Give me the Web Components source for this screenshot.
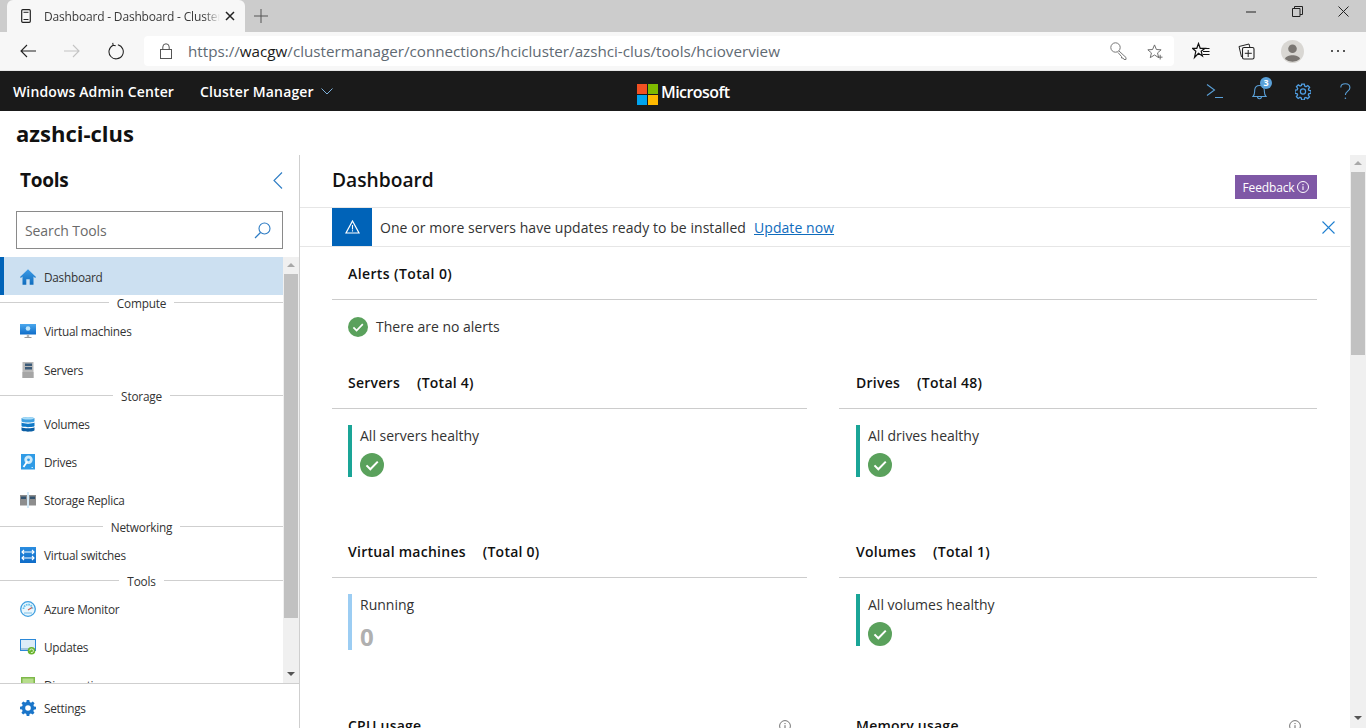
<!DOCTYPE html>
<html lang="en"><head><meta charset="utf-8"><title>Dashboard</title>
<style>
html,body{margin:0;height:100%;overflow:hidden;background:#fff}
body{width:1366px;height:728px;display:flex;flex-direction:column;font-family:"Open Sans","Noto Sans","Liberation Sans",sans-serif;color:#1a1a1a;font-size:14px}
.workspace{display:flex;height:573px;overflow:hidden}
</style></head><body>
<browser-chrome></browser-chrome>
<wac-header></wac-header>
<page-title>azshci-clus</page-title>
<div class="workspace">
<tool-sidebar>
<nav-item icon="home" active nudge>Dashboard</nav-item>
<nav-sep>Compute</nav-sep>
<nav-item icon="vm">Virtual machines</nav-item>
<nav-item icon="server" nudge>Servers</nav-item>
<nav-sep>Storage</nav-sep>
<nav-item icon="volumes">Volumes</nav-item>
<nav-item icon="drives">Drives</nav-item>
<nav-item icon="replica">Storage Replica</nav-item>
<nav-sep>Networking</nav-sep>
<nav-item icon="switches">Virtual switches</nav-item>
<nav-sep tight>Tools</nav-sep>
<nav-item icon="monitor">Azure Monitor</nav-item>
<nav-item icon="updates">Updates</nav-item>
<nav-item icon="diag">Diagnostics</nav-item>
</tool-sidebar>
<dash-view>
<section-head>Alerts (Total 0)</section-head>
<ok-line>There are no alerts</ok-line>
<dash-grid>
<dash-cell label="Servers" total="(Total 4)"><status-tile text="All servers healthy"></status-tile></dash-cell>
<dash-cell label="Drives" total="(Total 48)"><status-tile text="All drives healthy"></status-tile></dash-cell>
<dash-cell label="Virtual machines" total="(Total 0)"><status-tile text="Running" count="0"></status-tile></dash-cell>
<dash-cell label="Volumes" total="(Total 1)"><status-tile text="All volumes healthy"></status-tile></dash-cell>
<dash-cell label="CPU usage" info></dash-cell>
<dash-cell label="Memory usage" info></dash-cell>
</dash-grid>
</dash-view>
</div>
<script>
const ICONS={
home:`<svg viewBox="0 0 16 16" width="16" height="16"><defs><linearGradient id="gh" x1="0" y1="0" x2="0" y2="1"><stop offset="0" stop-color="#3c9be6"/><stop offset="1" stop-color="#0f6cbd"/></linearGradient></defs><path fill="url(#gh)" d="M8 .3 0 8l.9.9L2.500 7.500V15.800H6.300V10.300H9.700V15.800H13.500V7.500L15.100 8.900 16 8Z"/></svg>`,
vm:`<svg viewBox="0 0 16 16" width="16" height="16"><defs><linearGradient id="g1" x1="0" y1="0" x2="0" y2="1"><stop offset="0" stop-color="#4aa8ee"/><stop offset="1" stop-color="#0f6cc8"/></linearGradient></defs><rect y="1" width="16" height="10.500" fill="url(#g1)"/><circle cx="8" cy="5.500" r="2.300" fill="#bfe6fb"/><path fill="#b5b5b5" d="M6.800 11.500h2.400v2.500H6.800Z"/><path fill="#999" d="M4.500 14h7v1h-7Z"/></svg>`,
server:`<svg viewBox="0 0 16 16" width="16" height="16"><rect x="2.500" y="0" width="11" height="16" fill="#b9b9b9"/><rect x="5" y="1.500" width="7" height="2.500" fill="#3b5a78"/><rect x="5" y="5" width="7" height="2.500" fill="#3b5a78"/><rect x="2.500" y="10" width="11" height="6" fill="#a6a6a6"/></svg>`,
volumes:`<svg viewBox="0 0 16 16" width="16" height="16"><path fill="#3f9fe0" d="M1.500 2.500C1.500 .8 14.500 .8 14.500 2.500V5.300C14.500 7 1.500 7 1.500 5.300Z"/><path fill="#1079c7" d="M1.500 6.500c2 1.500 11 1.500 13 0V10C14.500 11.500 1.500 11.500 1.500 10Z"/><path fill="#0b5fa5" d="M1.500 11.200c2 1.500 11 1.500 13 0V14C14.500 16.200 1.500 16.200 1.500 14Z"/><ellipse cx="8" cy="2.300" rx="6" ry="1.300" fill="#a7dcf7"/></svg>`,
drives:`<svg viewBox="0 0 16 16" width="16" height="16"><rect x="1" width="14" height="15.500" fill="#2f9be6"/><circle cx="8.500" cy="5.800" r="4.200" fill="#cdeafa"/><circle cx="8.500" cy="5.800" r="1.400" fill="#2f9be6"/><path d="M7.300 7.500 3.500 13" stroke="#fff" stroke-width="1.800"/><rect x="11.500" y="13" width="1.500" height="1" fill="#bfe6fb"/></svg>`,
replica:`<svg viewBox="0 0 16 16" width="16" height="16"><rect y="3" width="7" height="10.500" fill="#8d8d8d"/><rect x="9" y="3" width="7" height="10.500" fill="#8d8d8d"/><rect x="1" y="4.500" width="5" height="2.500" fill="#33536f"/><rect x="10" y="4.500" width="5" height="2.500" fill="#33536f"/><rect x="7.500" y="0" width="1" height="16" fill="#a7d4f0"/></svg>`,
switches:`<svg viewBox="0 0 16 16" width="16" height="16"><defs><linearGradient id="gs" x1="0" y1="0" x2="0" y2="1"><stop offset="0" stop-color="#2a8de0"/><stop offset="1" stop-color="#0f6cc8"/></linearGradient></defs><rect width="16" height="16" fill="url(#gs)"/><g fill="none" stroke="#fff" stroke-width="1.100"><path d="M2 5h12M4 3 2 5l2 2M12 3l2 2-2 2"/><path d="M2 11h12M4 9l-2 2 2 2M12 9l2 2-2 2"/></g></svg>`,
monitor:`<svg viewBox="0 0 16 16" width="16" height="16"><circle cx="8" cy="8" r="7.300" fill="#e9f6fd" stroke="#3f9fe0" stroke-width="1.300"/><path d="M3.500 8A4.500 4.500 0 0 1 12.500 8" fill="none" stroke="#62c0ec" stroke-width="1.800" stroke-dasharray="1.600 .8"/><path d="M8 9 12 6.500" stroke="#c9574b" stroke-width="1.100"/><path d="M4 12h8" stroke="#9fd2ee" stroke-width="1.500"/></svg>`,
updates:`<svg viewBox="0 0 16 16" width="16" height="16"><rect x=".5" y=".5" width="15" height="11" fill="#dcecf8" stroke="#2b88d8"/><path fill="#a3c4dc" d="M1 9h14v2H1Z"/><circle cx="11.500" cy="11.700" r="3.800" fill="#69b42e"/><path d="M9.800 11.700a1.800 1.800 0 1 1 1.100 1.700" fill="none" stroke="#e9f8dd" stroke-width=".9"/></svg>`,
diag:`<svg viewBox="0 0 16 16" width="16" height="16"><rect x="1" y="0" width="14" height="15" fill="#7eb84a"/><rect x="2.500" y="1.500" width="11" height="7" fill="#b7dd8c"/></svg>`,
settings:`<svg viewBox="0 0 16 16" width="16" height="16"><path fill="#1a75c9" fill-rule="evenodd" d="M6.700 0h2.600l.4 2.100 1.300.6 1.800-1.200 1.800 1.800-1.200 1.800.6 1.300 2 .3v2.600l-2.100.4-.6 1.300 1.200 1.800-1.800 1.800-1.800-1.200-1.300.6-.3 2H6.700l-.4-2.100-1.300-.6-1.800 1.200-1.800-1.800 1.200-1.800-.6-1.300-2-.3V6.700l2.100-.4.600-1.300-1.200-1.800 1.800-1.800 1.800 1.200 1.300-.6ZM8 5.200A2.800 2.800 0 1 0 8 10.800 2.800 2.800 0 0 0 8 5.200Z"/></svg>`
};
const OK=s=>`<svg viewBox="0 0 20 20" width="${s}" height="${s}" style="display:block"><circle cx="10" cy="10" r="10" fill="#5aa15c"/><path d="M5.400 10.300 8.600 13.500 14.800 7.200" fill="none" stroke="#fff" stroke-width="1.700"/></svg>`;
const INFO=`<svg viewBox="0 0 12 12" width="12" height="12" style="display:block"><circle cx="6" cy="6" r="5.400" fill="none" stroke="#666" stroke-width=".9"/><path d="M6 5.200V9M6 3v1.100" stroke="#666" stroke-width="1"/></svg>`;
function def(name,css,html){
  customElements.define(name,class extends HTMLElement{
    connectedCallback(){
      if(this.shadowRoot)return;
      const r=this.attachShadow({mode:"open"});
      const h=typeof html==="function"?html(this):html;
      r.innerHTML=`<style>${css}</style>${h}`;
    }
  });
}
def("browser-chrome",`
:host{display:block;height:71px;font-family:"Open Sans",sans-serif;flex:none}
.strip{height:32px;background:#cccccc;display:flex;align-items:stretch;position:relative}
.win{margin-left:auto;display:flex}
.win span{width:46px;display:flex;align-items:center;justify-content:center;height:23px}
.tab{margin-left:7px;width:238px;background:#f7f7f7;border-radius:6px 6px 0 0;display:flex;align-items:center;box-sizing:border-box;padding-left:14px;color:#3a3a3a;font-size:12px;letter-spacing:-.18px}
.tab .t{margin-left:13px;width:176px;overflow:hidden;white-space:nowrap;-webkit-mask-image:linear-gradient(90deg,#000 160px,transparent 176px);mask-image:linear-gradient(90deg,#000 160px,transparent 176px)}
.tab .x{margin-left:5px;display:flex}
.plus{margin-left:9px;width:16px;display:flex;align-items:center}
.bar{height:38px;background:#f7f7f7;display:flex;align-items:center;border-bottom:1px solid #e6e6e6}
.b{display:flex;align-items:center;justify-content:center;flex:none}
.addr{margin-left:20px;width:1030px;height:30px;background:#fff;border-radius:4px;display:flex;align-items:center;font-size:15.200px;color:#5f6a73}
.addr b{font-weight:400;color:#1a1a1a}
.url{margin-left:16px;white-space:nowrap;flex:1}
`,`<div class="strip">
<div class="tab"><svg width="10" height="14" viewBox="0 0 10 14"><rect x=".7" y=".7" width="8.600" height="12.600" rx="1" fill="none" stroke="#222" stroke-width="1.200"/><path d="M2.500 10.500h5M2.500 3.300h5" stroke="#222"/></svg><span class="t">Dashboard - Dashboard - Cluster Manager</span><span class="x"><svg width="10" height="10" viewBox="0 0 10 10"><path d="M1 1l8 8M9 1l-8 8" stroke="#222" stroke-width="1.500"/></svg></span></div>
<div class="plus"><svg width="14" height="14" viewBox="0 0 14 14"><path d="M7 0v14M0 7h14" stroke="#555" stroke-width="1"/></svg></div>
<div class="win">
<span><svg width="10" height="2"><path d="M0 1h10" stroke="#222"/></svg></span>
<span><svg width="11" height="11" viewBox="0 0 11 11"><path d="M.5 2.500h7.500v8H.5ZM2.500 2.500V.5h8v8H8" fill="none" stroke="#222"/></svg></span>
<span><svg width="11" height="11" viewBox="0 0 11 11"><path d="M.5.500l10 10M10.500.5l-10 10" stroke="#222"/></svg></span>
</div></div>
<div class="bar">
<span class="b" style="width:16px;margin-left:20px"><svg width="16" height="14" viewBox="0 0 16 14"><path d="M16 7H1M7 1 1 7l6 6" fill="none" stroke="#222" stroke-width="1.100"/></svg></span>
<span class="b" style="width:16px;margin-left:28px"><svg width="16" height="14" viewBox="0 0 16 14"><path d="M0 7h15M9 1l6 6-6 6" fill="none" stroke="#c4c4c4" stroke-width="1.100"/></svg></span>
<span class="b" style="width:16px;margin-left:28px"><svg width="17" height="18" viewBox="0 0 17 18"><path d="M5.400 2.900A7.600 7.600 0 1 0 10.500 2.400M5 .3 5.500 3 8.200 3.500" fill="none" stroke="#222" stroke-width="1.100"/></svg></span>
<div class="addr"><span class="b" style="width:12px;margin-left:16px"><svg width="12" height="16" viewBox="0 0 12 16"><rect x=".5" y="6.500" width="11" height="9" fill="none" stroke="#555"/><path d="M2.800 6.500V4a3.200 3.200 0 0 1 6.400 0V6.500" fill="none" stroke="#555"/></svg></span>
<span class="url">https://<b>wacgw</b>/clustermanager/connections/hcicluster/azshci-clus/tools/hcioverview</span>
<span class="b" style="width:18px"><svg width="18" height="18" viewBox="0 0 18 18"><circle cx="5.500" cy="5.500" r="4.700" fill="none" stroke="#777"/><path d="M9 9l7 6.500v2h-2l-1-1.500h-1.500v-1.500L8 10.500" fill="none" stroke="#777"/></svg></span>
<span class="b" style="width:16px;margin-left:19px;margin-right:11px"><svg width="17" height="17" viewBox="0 0 17 17"><path d="M8 1.500 10 6.400l5 .3-3.800 3.300 1.200 5L8 12.200 3.500 15l1.200-5L.9 6.700l5-.3Z" fill="none" stroke="#666"/><path d="M14 12v5M11.500 14.500h5" stroke="#666"/></svg></span>
</div>
<span class="b" style="width:18px;margin-left:18px"><svg width="18" height="18" viewBox="0 0 18 18"><path d="M6.500 1.500 8.200 6.300H13L9.200 9.300 10.500 14 6.500 11.300 2.500 15.500 3.800 9.300 0.500 6.300H4.800Z" fill="#f7f7f7" stroke="#111" stroke-width="1.200"/><path d="M10.500 6.500h7M11 9.500h6.500M11 12.500h6.500" stroke="#111" stroke-width="1.100"/></svg></span>
<span class="b" style="width:18px;margin-left:27px"><svg width="17" height="17" viewBox="0 0 17 17"><path d="M3.500 14 1 3.500 11 1l.8 3" fill="none" stroke="#222"/><rect x="4.500" y="4.500" width="11.500" height="11.500" rx="1.500" fill="#f7f7f7" stroke="#222" stroke-width="1.100"/><path d="M10.200 7v7M6.800 10.300h7" stroke="#222"/></svg></span>
<span class="b" style="width:24px;margin-left:25px"><svg width="23" height="23" viewBox="0 0 23 23"><circle cx="11.500" cy="11.500" r="11.500" fill="#d9d7d3"/><circle cx="11.500" cy="8.800" r="4.300" fill="#7a7672"/><path d="M4 19c1-5 14-5 15 0a11.500 11.500 0 0 1-15 0Z" fill="#7a7672"/></svg></span>
<span class="b" style="width:16px;margin-left:26px"><svg width="16" height="4"><circle cx="2" cy="2" r="1" fill="#222"/><circle cx="8" cy="2" r="1" fill="#222"/><circle cx="14" cy="2" r="1" fill="#222"/></svg></span>
</div>`);
def("wac-header",`
:host{display:flex;height:40px;flex:none;background:#1a1a1a;color:#fff;align-items:center;font-weight:600;font-size:14px;letter-spacing:.13px;position:relative}
.a{margin-left:13px;white-space:nowrap}
.c{margin-left:26px;white-space:nowrap}
.ch{margin-left:7px;display:flex}
.ms{position:absolute;left:637px;top:11px;display:flex;align-items:center}
.ms span{margin-left:3px;font-size:16px;font-weight:600;letter-spacing:-.55px;padding-bottom:4px;line-height:20px}
.r{margin-left:auto;display:flex;align-items:center}
.r span{display:flex;justify-content:center;position:relative}
.badge{position:absolute;left:9px;top:-6px;width:12px;height:12px;border-radius:50%;background:#5aa0d8;color:#fff;font-size:9px;font-weight:700;display:flex;align-items:center;justify-content:center;letter-spacing:0;line-height:12px;font-style:normal}
`,`<div class="a">Windows Admin Center</div><div class="c">Cluster Manager</div>
<div class="ch"><svg width="12" height="7" viewBox="0 0 12 7"><path d="M.5.500 6 6l5.500-5.500" fill="none" stroke="#7fb2dc"/></svg></div>
<div class="ms"><svg width="21" height="21" viewBox="0 0 21 21"><rect width="10" height="10" fill="#f25022"/><rect x="11" width="10" height="10" fill="#7fba00"/><rect y="11" width="10" height="10" fill="#00a4ef"/><rect x="11" y="11" width="10" height="10" fill="#ffb900"/></svg><span>Microsoft</span></div>
<div class="r">
<span style="width:18px"><svg width="18" height="16" viewBox="0 0 18 16"><path d="M1 1.500 8.500 7 1 12.500M9 14.500h8" fill="none" stroke="#5aa0d8" stroke-width="1.100"/></svg></span>
<span style="width:16px;margin-left:27px"><svg width="15" height="17" viewBox="0 0 15 17"><path d="M1 13.500c2-2 1.500-4 1.700-6.500C3 4 5 2.500 7.500 2.500S12 4 12.300 7c.2 2.500-.3 4.500 1.700 6.500ZM5.500 13.500c0 3 4 3 4 0" fill="none" stroke="#5aa0d8" stroke-width="1.100"/></svg><em class="badge">3</em></span>
<span style="width:16px;margin-left:28px"><svg width="17" height="17" viewBox="0 0 16 16"><path fill="none" stroke="#4f9fe4" stroke-width="1.300" d="M6.700.6h2.600l.4 2 1.300.6 1.800-1.200 1.800 1.800-1.200 1.800.6 1.300 2 .3v2.600l-2.100.4-.6 1.300 1.200 1.800-1.800 1.800-1.800-1.200-1.300.6-.3 2H6.700l-.4-2.100-1.300-.6-1.800 1.200-1.800-1.800 1.200-1.800-.6-1.300-2-.3V6.700l2.100-.4.600-1.300-1.200-1.800 1.800-1.800 1.800 1.200 1.300-.6Z"/><circle cx="8" cy="8" r="2.600" fill="none" stroke="#4f9fe4" stroke-width="1.200"/></svg></span>
<span style="width:14px;margin-left:27px;margin-right:14px"><svg width="11" height="17" viewBox="0 0 11 17"><path d="M.8 4.500C.8 2 2.800.7 5.300.7c2.600 0 4.600 1.500 4.600 4 0 3.500-4.500 3.300-4.500 7.300" fill="none" stroke="#5aa0d8" stroke-width="1.100"/><circle cx="5.400" cy="15.200" r=".8" fill="#5aa0d8"/></svg></span>
</div>`);
def("page-title",`:host{display:flex;align-items:center;height:44px;flex:none;padding:0 16px;font-size:22px;font-weight:700;color:#111;box-sizing:border-box;background:#fff}`,`<slot></slot>`);
def("fake-scrollbar",`
:host{display:flex;flex-direction:column;align-items:center;background:#f0f0f0;flex:none;width:16px;height:100%;position:relative;box-sizing:border-box}
.u{margin-top:6px;width:0;height:0;border:4px solid transparent;border-top:0;border-bottom:4px solid #a8a8a8}
.d{position:absolute;bottom:7px;left:4px;width:0;height:0;border:4px solid transparent;border-bottom:0;border-top:4px solid #555}
:host([low]) .d{bottom:8px}
.th{background:#c1c1c1;width:14px}
`,h=>`<div class="u"></div><div class="th" style="margin-top:${h.getAttribute("gap")}px;height:${h.getAttribute("size")}px"></div><div class="d"></div>`);
def("tool-sidebar",`
:host{display:flex;flex-direction:column;flex:none;width:300px;border-right:1px solid #cfcfcf;box-sizing:border-box;height:573px}
.h{display:flex;align-items:center;justify-content:space-between;height:50px;padding:0 16px 0 20px;flex:none}
.h b{font-size:19px;font-weight:700;color:#111;letter-spacing:-.3px}
.s{margin:6px 16px 8px;height:38px;width:267px;box-sizing:border-box;border:1px solid #8a8a8a;display:flex;align-items:center;justify-content:space-between;padding:0 11px 0 8px;flex:none;color:#6a6a6a;font-size:14px;letter-spacing:-.1px}
.l{flex:1;display:flex;min-height:0;overflow:hidden}
.items{width:283px;flex:none;overflow:hidden;display:flex;flex-direction:column}
.f{height:45px;border-top:1px solid #cfcfcf;flex:none;display:flex;align-items:center;padding-top:4.500px;box-sizing:border-box}
`,`<div class="h"><b>Tools</b><svg width="10" height="17" viewBox="0 0 10 17"><path d="M9 .5 1 8.500l8 8" fill="none" stroke="#2d7cc4" stroke-width="1.100"/></svg></div>
<div class="s"><span>Search Tools</span><svg width="17" height="17" viewBox="0 0 17 17"><circle cx="10.500" cy="6.500" r="5.500" fill="none" stroke="#2d7cc4" stroke-width="1.100"/><path d="M6.500 10.500 1 16" stroke="#2d7cc4" stroke-width="1.200"/></svg></div>
<div class="l"><div class="items"><slot></slot></div><fake-scrollbar gap="7" size="344"></fake-scrollbar></div>
<div class="f"><nav-item icon="settings">Settings</nav-item></div>`);
def("nav-item",`
:host{display:flex;align-items:center;height:38px;flex:none;box-sizing:border-box;padding:0 0 0 20px;font-size:11.800px;color:#333;letter-spacing:-.26px;white-space:nowrap;width:100%}
:host([nudge]){padding-top:2px}
:host([active]){background:#cce0f1;box-shadow:inset 4px 0 0 #0063b8}
.i{width:16px;height:16px;margin-right:8px;display:block;flex:none}
svg{display:block}
`,h=>`<span class="i">${ICONS[h.getAttribute("icon")]}</span><slot></slot>`);
def("nav-sep",`
:host{display:flex;align-items:flex-start;height:17px;flex:none;font-size:11.800px;color:#333;letter-spacing:-.2px}
:host([tight]){height:16px}
.ln{flex:1;height:1px;background:#cfcfcf;margin-top:7px}
:host([tight]) .ln{margin-top:6px}
.t{padding:0 8px;line-height:16px}
:host([tight]) .t{line-height:14px}
`,`<div class="ln"></div><div class="t"><slot></slot></div><div class="ln"></div>`);
def("dash-view",`
:host{display:flex;flex:1;min-width:0;height:573px;overflow:hidden}
.m{flex:1;min-width:0;overflow:hidden;display:flex;flex-direction:column}
.top{height:52px;flex:none;display:flex;justify-content:space-between;padding:0 33px 0 32px;box-sizing:border-box}
.top b{font-size:19.200px;font-weight:600;color:#111;margin-top:11px;line-height:28px}
.fb{margin-top:20px;width:82px;height:24px;background:#7f58a6;color:#fff;font-size:12px;display:flex;align-items:center;justify-content:center;gap:3px;letter-spacing:-.15px}
.ban{height:38px;flex:none;border-top:1px solid #e6e6e6;border-bottom:1px solid #e6e6e6;display:flex;align-items:center;padding-left:32px;font-size:14px;color:#333;letter-spacing:.06px;white-space:nowrap}
.tx{padding-top:1px}
.bi{width:40px;height:38px;background:#0063b8;display:flex;align-items:center;justify-content:center;flex:none;margin-right:8px}
a{color:#0f6cbd;margin-left:8px;padding-top:1px}
.cl{margin-left:auto;margin-right:15px;display:flex}
.c{padding:0 33px 0 32px;box-sizing:border-box}
`,`<div class="m"><div class="top"><b>Dashboard</b><div class="fb">Feedback <svg width="12" height="12" viewBox="0 0 12 12"><circle cx="6" cy="6" r="5.500" fill="none" stroke="#fff"/><path d="M6 5.200V9M6 3v1.200" stroke="#fff" stroke-width="1.100"/></svg></div></div>
<div class="ban"><span class="bi"><svg width="15" height="14" viewBox="0 0 15 14"><path d="M7.500 1 14 13H1Z" fill="none" stroke="#fff" stroke-width="1.200"/><path d="M7.500 5v4.500M7.500 10.300v1.200" stroke="#fff" stroke-width="1.100"/></svg></span><span class="tx">One or more servers have updates ready to be installed</span><a href="#">Update now</a><span class="cl"><svg width="13" height="13" viewBox="0 0 13 13"><path d="M.5.500l12 12M12.500.5l-12 12" stroke="#1f7fd0" stroke-width="1.100"/></svg></span></div>
<div class="c"><slot></slot></div></div>
<fake-scrollbar gap="7" size="183" low></fake-scrollbar>`);
def("section-head",`
:host{display:block;padding:17px 16px 15px;font-size:14px;font-weight:600;color:#111;line-height:20px;border-bottom:1px solid #ccc;letter-spacing:.4px}
`,`<slot></slot>`);
def("ok-line",`
:host{display:flex;align-items:center;gap:8px;padding:17px 16px 0;font-size:14px;color:#333;height:20px;margin-bottom:35px}
span{padding-bottom:2px}
`,()=>`${OK(20)}<span><slot></slot></span>`);
def("dash-grid",`:host{display:grid;grid-template-columns:475px 478px;column-gap:32px;align-items:start}`,`<slot></slot>`);
def("dash-cell",`
:host{display:block}
:host([info]){margin-top:1px}
.h{display:flex;align-items:center;padding:1px 16px 15px;font-size:14px;font-weight:600;color:#111;line-height:20px;border-bottom:1px solid #ccc;letter-spacing:.25px}
:host(:nth-child(even)) .h,:host(:nth-child(even)) .b{padding-left:17px}
.h .t{margin-left:17px}
.h .n{margin-left:auto;margin-right:0}
.b{padding:16px 16px 0;margin-bottom:64px}
`,h=>`<div class="h"><span>${h.getAttribute("label")}</span>${h.hasAttribute("total")?`<span class="t">${h.getAttribute("total")}</span>`:""}${h.hasAttribute("info")?`<span class="n">${INFO}</span>`:""}</div><div class="b"><slot></slot></div>`);
def("status-tile",`
:host{display:block;border-left:4px solid #1aa597;padding-left:8px;height:52px;box-sizing:border-box;font-size:14px;color:#333}
:host([count]){border-left-color:#9ccdf3;height:56px}
.l{line-height:22px}
.v{margin-top:6px;display:block}
.n{font-size:24px;font-weight:700;color:#b0b0b0;line-height:28px;margin-top:7px;letter-spacing:0}
`,h=>`<div class="l">${h.getAttribute("text")}</div>${h.hasAttribute("count")?`<div class="n">${h.getAttribute("count")}</div>`:`<span class="v">${OK(24)}</span>`}`);
</script>
</body></html>
